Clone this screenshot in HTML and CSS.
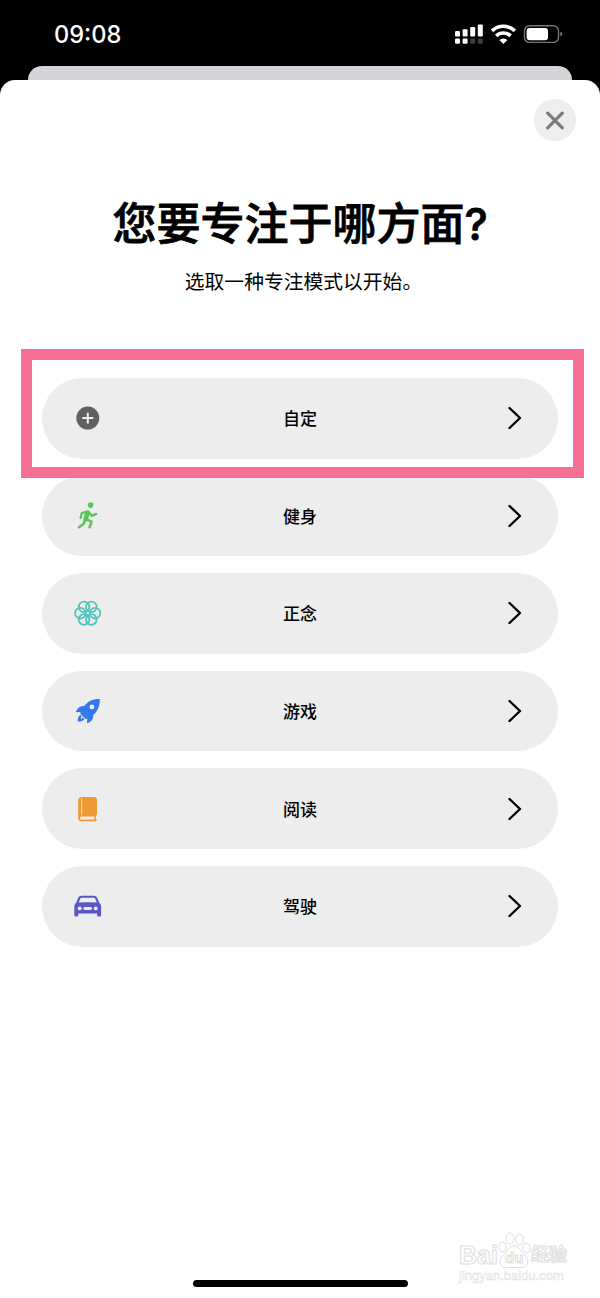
FILE: index.html
```
<!DOCTYPE html>
<html lang="zh-CN">
<head>
<meta charset="UTF-8">
<meta name="viewport" content="width=device-width, initial-scale=1.0">
<title>专注模式</title>
<link rel="stylesheet" href="styles.css">
</head>
<body>
<div class="screen">
<header class="status-bar">
  <span class="time">09:08</span>
  <svg class="status-icons" width="110" height="24" viewBox="0 0 110 24">
    <g fill="#fff">
      <rect x="2" y="9" width="5" height="5.5" rx="1.2"/>
      <rect x="9.6" y="7.3" width="5" height="7.2" rx="1.2"/>
      <rect x="17.2" y="5" width="5" height="9.5" rx="1.2"/>
      <rect x="24.8" y="2.6" width="5" height="11.9" rx="1.2"/>
      <rect x="2" y="16.6" width="5" height="5.2" rx="1.2"/>
      <rect x="9.6" y="16.6" width="5" height="5.2" rx="1.2"/>
    </g>
    <g fill="#3d3d3d">
      <rect x="17.2" y="16.6" width="5" height="5.2" rx="1.2"/>
      <rect x="24.8" y="16.6" width="5" height="5.2" rx="1.2"/>
    </g>
    <g fill="none" stroke="#fff" stroke-width="3.6">
      <path d="M39 8.9a16.4 16.4 0 0 1 22.8 0"/>
      <path d="M43.2 13.9a10.4 10.4 0 0 1 14.4 0"/>
    </g>
    <path d="M50.4 22l-4-4a5.8 5.8 0 0 1 8 0z" fill="#fff"/>
    <rect x="71.5" y="3.8" width="34" height="16.6" rx="5" fill="none" stroke="#777" stroke-width="1.4"/>
    <rect x="73.6" y="6" width="21.4" height="12.2" rx="3" fill="#fff"/>
    <path d="M107.3 9.6q2 .7 2 2.5t-2 2.5z" fill="#777"/>
  </svg>
</header>
<div class="back-card"></div>
<main class="sheet">
  <button class="close" aria-label="关闭">
    <svg width="20" height="20" viewBox="0 0 20 20"><path d="M2.7 3.2l14.6 14.6M17.3 3.2L2.7 17.8" stroke="#7c7c80" stroke-width="3.3" stroke-linecap="round"/></svg>
  </button>
  <h1>您要专注于哪方面?</h1>
  <p class="subtitle">选取一种专注模式以开始。</p>
  <ul class="modes">
    <li class="mode highlighted">
      <svg class="icon" viewBox="0 0 30 30">
        <circle cx="14.8" cy="15.1" r="11.5" fill="#616163"/>
        <path d="M14.8 9.7v10.8M9.4 15.1h10.8" stroke="#f2f2f2" stroke-width="2"/>
      </svg>
      <span>自定</span>
      <svg class="arrow" viewBox="0 0 16 24"><path d="M2.5 2L13 12 2.5 22"/></svg>
    </li>
    <li class="mode">
      <svg class="icon" viewBox="0 0 30 30">
        <circle cx="17.6" cy="4.1" r="2.8" fill="#5ac35c"/>
        <g fill="none" stroke="#5ac35c" stroke-linecap="round" stroke-linejoin="round">
          <path d="M7.6 16.9l1.2-4.7 5-1.6 2 .5 2.9 3.8 4.6-2" stroke-width="2.3"/>
          <path d="M14.6 11.8l-2 6.4" stroke-width="4.6"/>
          <path d="M12.6 18l6 2.6-2 5.6M12 19l-1.2 3.7L6 26.2" stroke-width="2.6"/>
        </g>
      </svg>
      <span>健身</span>
      <svg class="arrow" viewBox="0 0 16 24"><path d="M2.5 2L13 12 2.5 22"/></svg>
    </li>
    <li class="mode">
      <svg class="icon" viewBox="0 0 30 30">
        <g fill="none" stroke="#52c4bd" stroke-width="1.8">
          <circle cx="22" cy="15.2" r="5.3"/>
          <circle cx="18.35" cy="21.5" r="5.3"/>
          <circle cx="11.05" cy="21.5" r="5.3"/>
          <circle cx="7.4" cy="15.2" r="5.3"/>
          <circle cx="11.05" cy="8.9" r="5.3"/>
          <circle cx="18.35" cy="8.9" r="5.3"/>
        </g>
      </svg>
      <span>正念</span>
      <svg class="arrow" viewBox="0 0 16 24"><path d="M2.5 2L13 12 2.5 22"/></svg>
    </li>
    <li class="mode">
      <svg class="icon" viewBox="0 0 30 30">
        <path d="M26.2 3C20 2.9 14.6 5.6 11.2 9.9 7.6 9.8 4.6 11.6 3 15.3q-.3 1 .8.9l3.9-.3c-.6 1.1-.5 1.7.3 2.5l4 4c.8.7 1.4.7 2.4.1l-.4 3.7q0 1.1 1 .8c3.6-1.4 5.4-4.2 5.3-8C24.6 15.5 26.9 10 26.8 3.6q0-.6-.6-.6z" fill="#3478f0"/>
        <circle cx="18.9" cy="10.9" r="2.4" fill="#ededed"/>
        <path d="M7.3 18.9c-2 1-2.7 3.6-2.6 6.6 2.9.2 5.7-.5 6.6-2.5l-1.6-1.5c-.5.9-1.1 1.2-2.1 1.3 0-1 .4-1.7 1.2-2.3z" fill="#3478f0"/>
      </svg>
      <span>游戏</span>
      <svg class="arrow" viewBox="0 0 16 24"><path d="M2.5 2L13 12 2.5 22"/></svg>
    </li>
    <li class="mode">
      <svg class="icon" viewBox="0 0 30 30">
        <path d="M8.4 3h12.6q3 0 3 3v14.5q0 1-1 1.3v3.6q1 .2 1 .9t-1 .9H8.4Q5.2 27.2 5.2 24V6q0-3 3.2-3z" fill="#f09a37"/>
        <path d="M8.6 4.3v17" stroke="#f8d3a2" stroke-width="1.2"/>
        <path d="M8.6 22.4h12.8v3H8.4q-1.5 0-1.5-1.5t1.7-1.5z" fill="#f5eee4"/>
      </svg>
      <span>阅读</span>
      <svg class="arrow" viewBox="0 0 16 24"><path d="M2.5 2L13 12 2.5 22"/></svg>
    </li>
    <li class="mode">
      <svg class="icon" viewBox="0 0 30 30">
        <path fill-rule="evenodd" d="M8.5 4.7h12.4q2.5 0 3.4 2.3l1.8 4.6q2 1.5 2 4v8.5q0 1.5-1.5 1.5h-1q-1.5 0-1.5-1.5v-1.5H5.3v1.5q0 1.5-1.5 1.5h-1q-1.5 0-1.5-1.5v-8.5q0-2.5 2-4L5.1 7q.9-2.3 3.4-2.3zM8.8 6.8q-1.3 0-1.7 1.1L5.7 11.5q9-.7 18 0l-1.4-3.6q-.4-1.1-1.7-1.1z" fill="#5856c8"/>
        <circle cx="6.7" cy="17.4" r="1.9" fill="#ededed"/>
        <circle cx="22.7" cy="17.4" r="1.9" fill="#ededed"/>
        <rect x="10.4" y="16" width="8.6" height="2.9" rx="1.45" fill="#ededed"/>
      </svg>
      <span>驾驶</span>
      <svg class="arrow" viewBox="0 0 16 24"><path d="M2.5 2L13 12 2.5 22"/></svg>
    </li>
  </ul>
  <div class="home-bar"></div>
  <div class="watermark">
    <div class="wm-logo">
      <span>Bai</span>
      <svg width="33" height="37" viewBox="0 0 33 37">
        <g fill="#fff" stroke="#dedede" stroke-width="1">
          <ellipse cx="4.5" cy="15" rx="3.6" ry="4.8"/>
          <ellipse cx="12" cy="6.5" rx="4" ry="5.5"/>
          <ellipse cx="21.5" cy="7.5" rx="3.8" ry="5.5"/>
          <ellipse cx="28.5" cy="16" rx="3.6" ry="4.8"/>
          <path d="M16 14c5 0 5.5 4 8.5 7 3.5 3 6 5 5 10-1 4-5 5-9 4.500h-9C7 36 3 35 2 31c-1-5 3-7.5 6-10.5S11.5 14 16 14z"/>
        </g>
        <text x="7" y="31">du</text>
      </svg>
      <span class="wm-cn">经验</span>
    </div>
    <div class="wm-url">jingyan.baidu.com</div>
  </div>
</main>
</div>
</body>
</html>
```
FILE: styles.css
```
* {
  padding: 0;
  margin: 0;
  box-sizing: border-box;
}
body {
  background-color: #000;
  font-family: Inter, "Noto Sans CJK SC", sans-serif;
  color: #000;
}
.screen {
  display: flex;
  flex-direction: column;
  width: 600px;
  height: 1298px;
  overflow: hidden;
}
.status-bar {
  display: flex;
  justify-content: space-between;
  height: 66px;
  padding: 20px 37px 0 54px;
}
.time {
  color: #fff;
  font-size: 23.6px;
  font-weight: 500;
  line-height: 29px;
}
.status-icons {
  margin-top: 2px;
}
.back-card {
  height: 14px;
  margin: 0 28px;
  background-color: #d5d4d9;
  border-radius: 14px 14px 0 0;
}
.sheet {
  position: relative;
  display: flex;
  flex-direction: column;
  flex: 1;
  background-color: #fff;
  border-radius: 15px 15px 0 0;
}
.close {
  display: flex;
  align-items: center;
  justify-content: center;
  align-self: flex-end;
  width: 42px;
  height: 42px;
  margin: 19px 24px 0 0;
  border: none;
  border-radius: 50%;
  background-color: #eee;
}
h1 {
  margin-top: 53px;
  font-size: 44px;
  font-weight: 500;
  line-height: 60px;
  text-align: center;
  -webkit-text-stroke: 0.8px #000;
}
.subtitle {
  margin-top: 13px;
  padding-left: 7px;
  font-size: 19.8px;
  line-height: 30px;
  text-align: center;
}
.modes {
  display: flex;
  flex-direction: column;
  gap: 17px;
  margin-top: 81px;
  padding: 0 42px;
  list-style: none;
}
.mode {
  position: relative;
  display: flex;
  align-items: center;
  justify-content: space-between;
  height: 80.6px;
  padding: 0 35px 0 31px;
  border-radius: 41px;
  background-color: #ededed;
  font-size: 17px;
  font-weight: 500;
}
.mode span {
  flex: 1;
  padding: 0 10px 1px 0;
  text-align: center;
}
.icon {
  width: 30px;
  height: 30px;
}
.arrow {
  width: 16px;
  height: 24px;
  fill: none;
  stroke: #000;
  stroke-width: 2.4;
  stroke-linecap: round;
  stroke-linejoin: round;
}
/* 粉色标注框 */
.highlighted::after {
  content: "";
  position: absolute;
  z-index: 1;
  top: -29px;
  left: -21px;
  box-sizing: border-box;
  width: 563px;
  height: 129px;
  border: 11px solid #f86f96;
}
.home-bar {
  width: 215px;
  height: 7px;
  margin: auto auto 11px;
  border-radius: 4px;
  background-color: #000;
}
.watermark {
  position: absolute;
  left: 459px;
  top: 1152px;
  color: #fff;
  font-family: "Liberation Sans", "Noto Sans CJK SC", sans-serif;
  -webkit-text-stroke: 1px #dedede;
}
.wm-logo {
  display: flex;
  align-items: flex-end;
  height: 37px;
  font-size: 25px;
  font-weight: 700;
  line-height: 27px;
}
.wm-logo text {
  fill: #fff;
  stroke: #dedede;
  stroke-width: 1;
  font-size: 15px;
  font-weight: 700;
}
.wm-cn {
  font-size: 18px;
}
.wm-url {
  font-size: 13px;
  line-height: 14px;
  -webkit-text-stroke: 0.5px #dedede;
}
```
